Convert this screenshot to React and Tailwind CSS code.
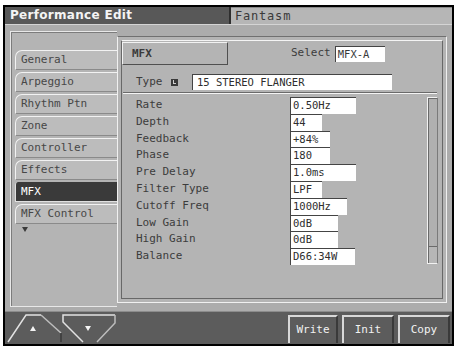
import React from "react";

const tabs = ["General", "Arpeggio", "Rhythm Ptn", "Zone", "Controller", "Effects", "MFX", "MFX Control"];

const rows = [
  ["Rate", "0.50Hz", "w-[66px]"],
  ["Depth", "44", "w-[32px]"],
  ["Feedback", "+84%", "w-[40px]"],
  ["Phase", "180", "w-[40px]"],
  ["Pre Delay", "1.0ms", "w-[66px]"],
  ["Filter Type", "LPF", "w-[32px]"],
  ["Cutoff Freq", "1000Hz", "w-[57px]"],
  ["Low Gain", "0dB", "w-[48px]"],
  ["High Gain", "0dB", "w-[48px]"],
  ["Balance", "D66:34W", "w-[65px]"],
];

function TitleBar() {
  return (
    <div className="h-[18px] flex border-b border-[#d4d4d4]">
      <div className="w-[224px] bg-[#585858] text-[#f4f4f4] font-bold text-[12px] leading-[17px] pl-[5px] font-['DejaVu_Sans',sans-serif] tracking-[0.3px]">
        Performance Edit
      </div>
      <div className="w-[2px] bg-[#2e2e2e]" />
      <div className="flex-1 bg-[#b6b6b6] border-t border-[#8a8a8a] text-[12px] leading-[16px] pl-[4px] tracking-[0.8px] text-[#3a3a3a]">
        Fantasm
      </div>
    </div>
  );
}

function LeftPanel() {
  return (
    <div className="ml-[5px] mt-[6px] w-[107px] h-[276px] border-t border-l border-b border-[#e8e8e8] bg-[#b4b4b4]">
      <div className="h-full border-l border-t border-[#7c7c7c] pl-[3px] pt-[17px]">
        {tabs.map((t) =>
          t === "MFX" ? (
            <div
              key={t}
              className="h-[20px] mb-[2px] rounded-tl-[3px] border-l border-b border-[#e0e0e0] bg-[#3a3a3a] text-white pl-[5px] text-[11px] leading-[19px]"
            >
              {t}
            </div>
          ) : (
            <div
              key={t}
              className="h-[20px] mb-[2px] rounded-tl-[7px] border-t border-l border-[#f2f2f2] border-b border-b-[#8a8a8a] bg-[#bcbcbc] pl-[5px] text-[11px] leading-[18px] text-[#474747]"
            >
              {t}
            </div>
          )
        )}
        <svg width="6" height="5" className="ml-[7px] mt-[3px]" viewBox="0 0 6 5">
          <polygon points="0,0 6,0 3,5" fill="#3a3a3a" />
        </svg>
      </div>
    </div>
  );
}

function RightPanel() {
  return (
    <div className="mt-[11px] w-[330px] h-[267px] border border-[#f0f0f0] border-t-[#707070] p-[3px] bg-[#b4b4b4]">
      <div className="h-full border border-[#686868] border-t-[#f4f4f4]">
        {/* header */}
        <div className="flex items-start mt-[1px] h-[23px]">
          <div className="w-[106px] h-[23px] border border-[#f2f2f2] border-b-[#505050] border-r-[#505050] pl-[9px] font-bold text-[11px] leading-[21px] text-[#3a3a3a]">
            MFX
          </div>
          <div className="ml-[63px] mt-[3px] text-[11px] leading-[16px] text-[#3c3c3c]">Select</div>
          <div className="ml-[4px] mt-[4px] w-[50px] h-[16px] bg-white border-t border-l border-[#444] pl-[2px] text-[10.5px] leading-[15px] text-[#3a3a3a]">
            MFX-A
          </div>
        </div>
        {/* type */}
        <div className="flex items-center mt-[9px] h-[16px] pl-[14px]">
          <div className="text-[11px] leading-[16px] text-[#3c3c3c] w-[35px]">Type</div>
          <div className="w-[7px] h-[7px] bg-[#3a3a3a] relative">
            <div className="absolute left-[2px] top-[1px] w-[1px] h-[4px] bg-[#cfcfcf]" />
            <div className="absolute left-[2px] top-[4px] w-[3px] h-[1px] bg-[#cfcfcf]" />
          </div>
          <div className="ml-[14px] w-[200px] h-[16px] bg-white border-t border-l border-[#444] pl-[4px] text-[10.5px] leading-[15px] text-[#2e2e2e]">
            15 STEREO FLANGER
          </div>
        </div>
        {/* separator */}
        <div className="mt-[2px] ml-[1px] w-[314px] h-[2px] border-t border-[#6a6a6a] border-b border-b-[#f4f4f4]" />
        {/* params */}
        <div className="mt-[3px] flex">
          <div className="w-[305px]">
            {rows.map(([label, value, w], i) => (
              <div key={i} className="h-[16.8px] flex items-stretch pl-[14px]">
                <div className="w-[154px] text-[11px] leading-[16.8px] text-[#3c3c3c]">{label}</div>
                <div
                  className={`${w} bg-white border-t border-l border-[#444] pl-[2px] text-[10.5px] leading-[15px] text-[#2e2e2e]`}
                >
                  {value}
                </div>
              </div>
            ))}
          </div>
          <div className="w-[11px] h-[167px] border border-[#f2f2f2] border-r-[#7a7a7a] border-b-[#f2f2f2] flex flex-col">
            <div className="h-[149px] border-l border-t border-[#6a6a6a] border-b border-b-[#6a6a6a] bg-[#b0b0b0]" />
            <div className="flex-1 bg-[#b6b6b6] border-l border-[#6a6a6a]" />
          </div>
        </div>
      </div>
    </div>
  );
}

function ActionButton({ label, w }) {
  return (
    <div
      className={`${w} h-[28px] border-t-2 border-l-2 border-[#d8d8d8] border-r-2 border-r-[#3a3a3a] bg-[#5c5c5c] text-[#f2f2f2] text-[11px] leading-[26px] text-center`}
    >
      {label}
    </div>
  );
}

function BottomBar() {
  return (
    <div className="h-[33px] bg-[#5c5c5c] border-t border-[#8c8c8c] flex items-end">
      <svg width="112" height="30" viewBox="0 0 112 30" className="ml-[1px] mb-[1px]">
        <polygon points="2,29 20,2 35,2 55,20 55,29" fill="#5c5c5c" />
        <polyline points="2,29 20,2 35,2" fill="none" stroke="#e2e2e2" strokeWidth="1.5" />
        <polyline points="35,2 55,20" fill="none" stroke="#bdbdbd" strokeWidth="1.5" />
        <polyline points="55,20 55,29" fill="none" stroke="#3a3a3a" strokeWidth="1.5" />
        <polygon points="24,18 30,18 27,13" fill="#f4f4f4" />
        <polygon points="57,2 109,2 109,10 91,29 77,29 57,9" fill="#5c5c5c" />
        <polyline points="77,29 57,9 57,2 109,2" fill="none" stroke="#e2e2e2" strokeWidth="1.5" />
        <polyline points="109,2 109,10 91,29" fill="none" stroke="#bdbdbd" strokeWidth="1.5" />
        <polygon points="79,13 85,13 82,18" fill="#f4f4f4" />
      </svg>
      <div className="ml-auto mr-[2px] mb-[1px] flex gap-[4px]">
        <ActionButton label="Write" w="w-[50px]" />
        <ActionButton label="Init" w="w-[52px]" />
        <ActionButton label="Copy" w="w-[52px]" />
      </div>
    </div>
  );
}

export default function App() {
  return (
    <div className="w-[456px] h-[351px] bg-white pt-[5px] pl-[3px] font-['DejaVu_Sans_Mono',monospace] text-[#3c3c3c]">
      <div className="w-[451px] h-[341px] border-2 border-black flex flex-col bg-[#acacac] overflow-hidden">
        <TitleBar />
        <div className="h-[286px] flex items-start">
          <LeftPanel />
          <RightPanel />
        </div>
        <BottomBar />
      </div>
    </div>
  );
}
